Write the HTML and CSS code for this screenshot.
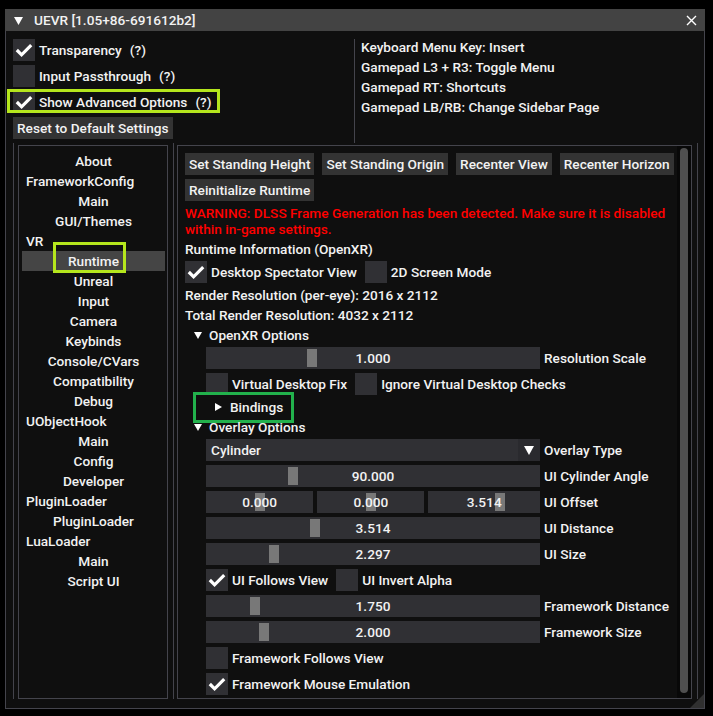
FILE: index.html
```html
<!DOCTYPE html>
<html>
<head>
<meta charset="utf-8">
<link rel="stylesheet" href="styles.css">
</head>
<body>
<div class="win">
  <div class="titlebar">
    <svg class="t-arrow" width="9" height="8" viewBox="0 0 9 8"><polygon points="0,0 9,0 4.5,8" fill="#fff"/></svg>
    <span class="t-text">UEVR [1.05+86-691612b2]</span>
    <svg class="t-close" width="11" height="11" viewBox="0 0 11 11"><path d="M1 1 L10 10 M10 1 L1 10" stroke="#fff" stroke-width="1.4"/></svg>
  </div>
  <div class="body">
    <div class="top">
      <div class="top-left">
        <div class="row">
          <span class="cb"><svg width="22" height="22" viewBox="0 0 22 22"><polyline points="3.8,11 8.6,15.8 18.2,6.2" fill="none" stroke="#fff" stroke-width="3.2"/></svg></span>
          <span class="lbl">Transparency</span><span class="help">(?)</span>
        </div>
        <div class="row">
          <span class="cb"></span>
          <span class="lbl">Input Passthrough</span><span class="help">(?)</span>
        </div>
        <div class="row mark-row">
          <span class="cb"><svg width="22" height="22" viewBox="0 0 22 22"><polyline points="3.8,11 8.6,15.8 18.2,6.2" fill="none" stroke="#fff" stroke-width="3.2"/></svg></span>
          <span class="lbl">Show Advanced Options</span><span class="help">(?)</span>
          <span class="mark mark-adv"></span>
        </div>
        <div class="row"><span class="btn">Reset to Default Settings</span></div>
      </div>
      <div class="top-right">
        <div class="tline">Keyboard Menu Key: Insert</div>
        <div class="tline">Gamepad L3 + R3: Toggle Menu</div>
        <div class="tline">Gamepad RT: Shortcuts</div>
        <div class="tline">Gamepad LB/RB: Change Sidebar Page</div>
      </div>
    </div>
    <div class="table">
      <div class="side-col">
        <div class="side-child">
          <div class="si c">About</div>
          <div class="si l">FrameworkConfig</div>
          <div class="si c">Main</div>
          <div class="si c">GUI/Themes</div>
          <div class="si l">VR</div>
          <div class="si c sel">Runtime<span class="mark mark-rt"></span></div>
          <div class="si c">Unreal</div>
          <div class="si c">Input</div>
          <div class="si c">Camera</div>
          <div class="si c">Keybinds</div>
          <div class="si c">Console/CVars</div>
          <div class="si c">Compatibility</div>
          <div class="si c">Debug</div>
          <div class="si l">UObjectHook</div>
          <div class="si c">Main</div>
          <div class="si c">Config</div>
          <div class="si c">Developer</div>
          <div class="si l">PluginLoader</div>
          <div class="si c">PluginLoader</div>
          <div class="si l">LuaLoader</div>
          <div class="si c">Main</div>
          <div class="si c">Script UI</div>
        </div>
      </div>
      <div class="content-col">
        <div class="content-child">
          <div class="content">
            <div class="brow">
              <span class="btn">Set Standing Height</span>
              <span class="btn">Set Standing Origin</span>
              <span class="btn">Recenter View</span>
              <span class="btn">Recenter Horizon</span>
            </div>
            <div class="brow"><span class="btn">Reinitialize Runtime</span></div>
            <div class="warn">WARNING: DLSS Frame Generation has been detected. Make sure it is disabled<br>within in-game settings.</div>
            <div class="text">Runtime Information (OpenXR)</div>
            <div class="row">
              <span class="cb"><svg width="22" height="22" viewBox="0 0 22 22"><polyline points="3.8,11 8.6,15.8 18.2,6.2" fill="none" stroke="#fff" stroke-width="3.2"/></svg></span>
              <span class="lbl">Desktop Spectator View</span>
              <span class="cb gap8"></span>
              <span class="lbl">2D Screen Mode</span>
            </div>
            <div class="text">Render Resolution (per-eye): 2016 x 2112</div>
            <div class="text">Total Render Resolution: 4032 x 2112</div>
            <div class="tree"><svg width="8" height="7" viewBox="0 0 8 7"><polygon points="0,0 8,0 4,7" fill="#fff"/></svg><span class="tlabel">OpenXR Options</span></div>
            <div class="prow">
              <div class="slider"><span class="grab" style="left:101px"></span><span class="val">1.000</span></div>
              <span class="plabel">Resolution Scale</span>
            </div>
            <div class="row ind">
              <span class="cb"></span>
              <span class="lbl">Virtual Desktop Fix</span>
              <span class="cb gap8"></span>
              <span class="lbl">Ignore Virtual Desktop Checks</span>
            </div>
            <div class="tree ind"><svg width="7" height="8" viewBox="0 0 7 8"><polygon points="0,0 7,4 0,8" fill="#fff"/></svg><span class="tlabel">Bindings</span><span class="mark mark-bind"></span></div>
            <div class="tree"><svg width="8" height="7" viewBox="0 0 8 7"><polygon points="0,0 8,0 4,7" fill="#fff"/></svg><span class="tlabel">Overlay Options</span></div>
            <div class="prow">
              <div class="combo"><span class="ctext">Cylinder</span><span class="carrow"><svg width="10" height="9" viewBox="0 0 10 9"><polygon points="0,0 10,0 5,9" fill="#fff"/></svg></span></div>
              <span class="plabel">Overlay Type</span>
            </div>
            <div class="prow">
              <div class="slider"><span class="grab" style="left:82px"></span><span class="val">90.000</span></div>
              <span class="plabel">UI Cylinder Angle</span>
            </div>
            <div class="prow">
              <div class="multi">
                <div class="slider part"><span class="grab" style="left:49px"></span><span class="val">0.000</span></div>
                <div class="slider part"><span class="grab" style="left:49px"></span><span class="val">0.000</span></div>
                <div class="slider part"><span class="grab" style="left:67px"></span><span class="val">3.514</span></div>
              </div>
              <span class="plabel">UI Offset</span>
            </div>
            <div class="prow">
              <div class="slider"><span class="grab" style="left:104px"></span><span class="val">3.514</span></div>
              <span class="plabel">UI Distance</span>
            </div>
            <div class="prow">
              <div class="slider"><span class="grab" style="left:63px"></span><span class="val">2.297</span></div>
              <span class="plabel">UI Size</span>
            </div>
            <div class="row ind">
              <span class="cb"><svg width="22" height="22" viewBox="0 0 22 22"><polyline points="3.8,11 8.6,15.8 18.2,6.2" fill="none" stroke="#fff" stroke-width="3.2"/></svg></span>
              <span class="lbl">UI Follows View</span>
              <span class="cb gap8"></span>
              <span class="lbl">UI Invert Alpha</span>
            </div>
            <div class="prow">
              <div class="slider"><span class="grab" style="left:44px"></span><span class="val">1.750</span></div>
              <span class="plabel">Framework Distance</span>
            </div>
            <div class="prow">
              <div class="slider"><span class="grab" style="left:53px"></span><span class="val">2.000</span></div>
              <span class="plabel">Framework Size</span>
            </div>
            <div class="row ind">
              <span class="cb"></span>
              <span class="lbl">Framework Follows View</span>
            </div>
            <div class="row ind">
              <span class="cb"><svg width="22" height="22" viewBox="0 0 22 22"><polyline points="3.8,11 8.6,15.8 18.2,6.2" fill="none" stroke="#fff" stroke-width="3.2"/></svg></span>
              <span class="lbl">Framework Mouse Emulation</span>
            </div>
          </div>
          <div class="scrollbar"><div class="sgrab"></div></div>
        </div>
      </div>
    </div>
  </div>
  <div class="grip"></div>
</div>
</body>
</html>
```

FILE: styles.css
```css
* { box-sizing: border-box; }
html, body { margin: 0; padding: 0; background: #000; }
body {
  font-family: Roboto, "Noto Sans", sans-serif;
  font-weight: 500;
  font-size: 13.65px;
  line-height: 16px;
  color: #f2f2f2;
}
.win {
  position: relative;
  margin: 9px 0 0 5px;
  width: 700px;
  height: 700px;
  background: #0f0f0f;
  border: 1px solid #44444c;
  border-top: none;
  display: flex;
  flex-direction: column;
}
.titlebar {
  height: 22px;
  margin: 0 -1px;
  background: #434343;
  display: flex;
  align-items: center;
  padding: 0 8px 0 9px;
  flex: none;
}
.t-arrow { flex: none; margin-top: 1px; }
.t-text { margin-left: 11px; flex: 1; }
.t-close { flex: none; }
.body {
  flex: 1;
  padding: 8px 6px 0 7px;
  display: flex;
  flex-direction: column;
}
.top { display: flex; height: 104px; flex: none; }
.top-left {
  width: 341px;
  display: flex;
  flex-direction: column;
  gap: 4px;
}
.top-right {
  flex: 1;
  border-left: 1px solid #44444c;
  padding-left: 6px;
  display: flex;
  flex-direction: column;
  gap: 4px;
}
.tline { height: 16px; white-space: nowrap; }
.row {
  position: relative;
  display: flex;
  align-items: center;
  height: 22px;
  white-space: nowrap;
}
.cb {
  width: 22px;
  height: 22px;
  background: #303034;
  flex: none;
  display: block;
}
.cb svg { display: block; }
.lbl { margin-left: 4px; }
.help { margin-left: 8px; }
.gap8 { margin-left: 8px; }
.btn {
  display: inline-block;
  height: 22px;
  line-height: 22px;
  padding: 0 4px;
  background: #333333;
  white-space: nowrap;
}
.mark { position: absolute; pointer-events: none; }
.mark-adv {
  left: -6px; top: -2px; width: 213px; height: 24px;
  border: 3px solid #b5e61d;
}
.table {
  display: flex;
  height: 556px;
  flex: none;
}
.side-col {
  width: 161px;
  border-left: 1px solid #44444c;
  border-right: 1px solid #44444c;
  padding: 2px 5px 0 4px;
}
.side-child {
  width: 150px;
  height: 554px;
  border: 1px solid #44444c;
  padding: 5px 2px 0 3px;
}
.si {
  position: relative;
  height: 20px;
  line-height: 20px;
  white-space: nowrap;
}
.si.c { text-align: center; }
.si.l { padding-left: 4px; }
.si.sel { background: #454545; }
.mark-rt {
  left: 31px; top: -9px; width: 73px; height: 31px;
  border: 3px solid #b5e61d;
}
.content-col {
  flex: 1;
  border-right: 1px solid #44444c;
  padding: 2px 5px 0 3px;
}
.content-child {
  height: 554px;
  border: 1px solid #44444c;
  display: flex;
  overflow: hidden;
}
.content {
  flex: 1;
  padding: 7px 0 0 7px;
  display: flex;
  flex-direction: column;
  gap: 4px;
  overflow: hidden;
}
.brow { display: flex; gap: 8px; height: 22px; flex: none; }
.warn { color: #ff0000; white-space: nowrap; flex: none; }
.text { height: 16px; white-space: nowrap; flex: none; }
.row, .prow, .tree { flex: none; }
.ind { padding-left: 21px; }
.tree {
  position: relative;
  height: 16px;
  display: flex;
  align-items: center;
  padding-left: 9px;
  white-space: nowrap;
}
.tree.ind { padding-left: 30px; }
.tree svg { flex: none; display: block; }
.tlabel { margin-left: 7px; }
.tree.ind .tlabel { margin-left: 8px; }
.mark-bind {
  left: 8px; top: -7px; width: 101px; height: 31px;
  border: 3px solid #22b14c;
}
.prow {
  display: flex;
  align-items: center;
  height: 22px;
  padding-left: 21px;
  gap: 4px;
  white-space: nowrap;
}
.slider {
  position: relative;
  width: 334px;
  height: 22px;
  line-height: 22px;
  background: #303034;
  text-align: center;
  flex: none;
}
.slider.part { width: auto; flex: 1; }
.multi { width: 334px; display: flex; gap: 4px; flex: none; }
.multi .slider.part:last-child { flex: 1.04; }
.grab {
  position: absolute;
  top: 2px;
  width: 10px;
  height: 18px;
  background: #787878;
}
.val { position: relative; }
.combo {
  width: 334px;
  height: 22px;
  background: #303034;
  display: flex;
  align-items: center;
  flex: none;
}
.ctext { flex: 1; padding-left: 5px; }
.carrow {
  width: 22px;
  height: 22px;
  background: #2a2a2e;
  display: flex;
  align-items: center;
  justify-content: center;
}
.carrow svg { display: block; }
.scrollbar {
  width: 14px;
  flex: none;
  padding: 2px 3px 5px 3px;
  background: #080808;
}
.sgrab {
  width: 8px;
  height: 100%;
  background: #4f4f4f;
  border-radius: 4px;
}
.grip {
  position: absolute;
  right: 0;
  bottom: 0;
  width: 14px;
  height: 14px;
  background: #303030;
  clip-path: polygon(100% 0, 100% 100%, 0 100%);
  z-index: 0;
}
```
